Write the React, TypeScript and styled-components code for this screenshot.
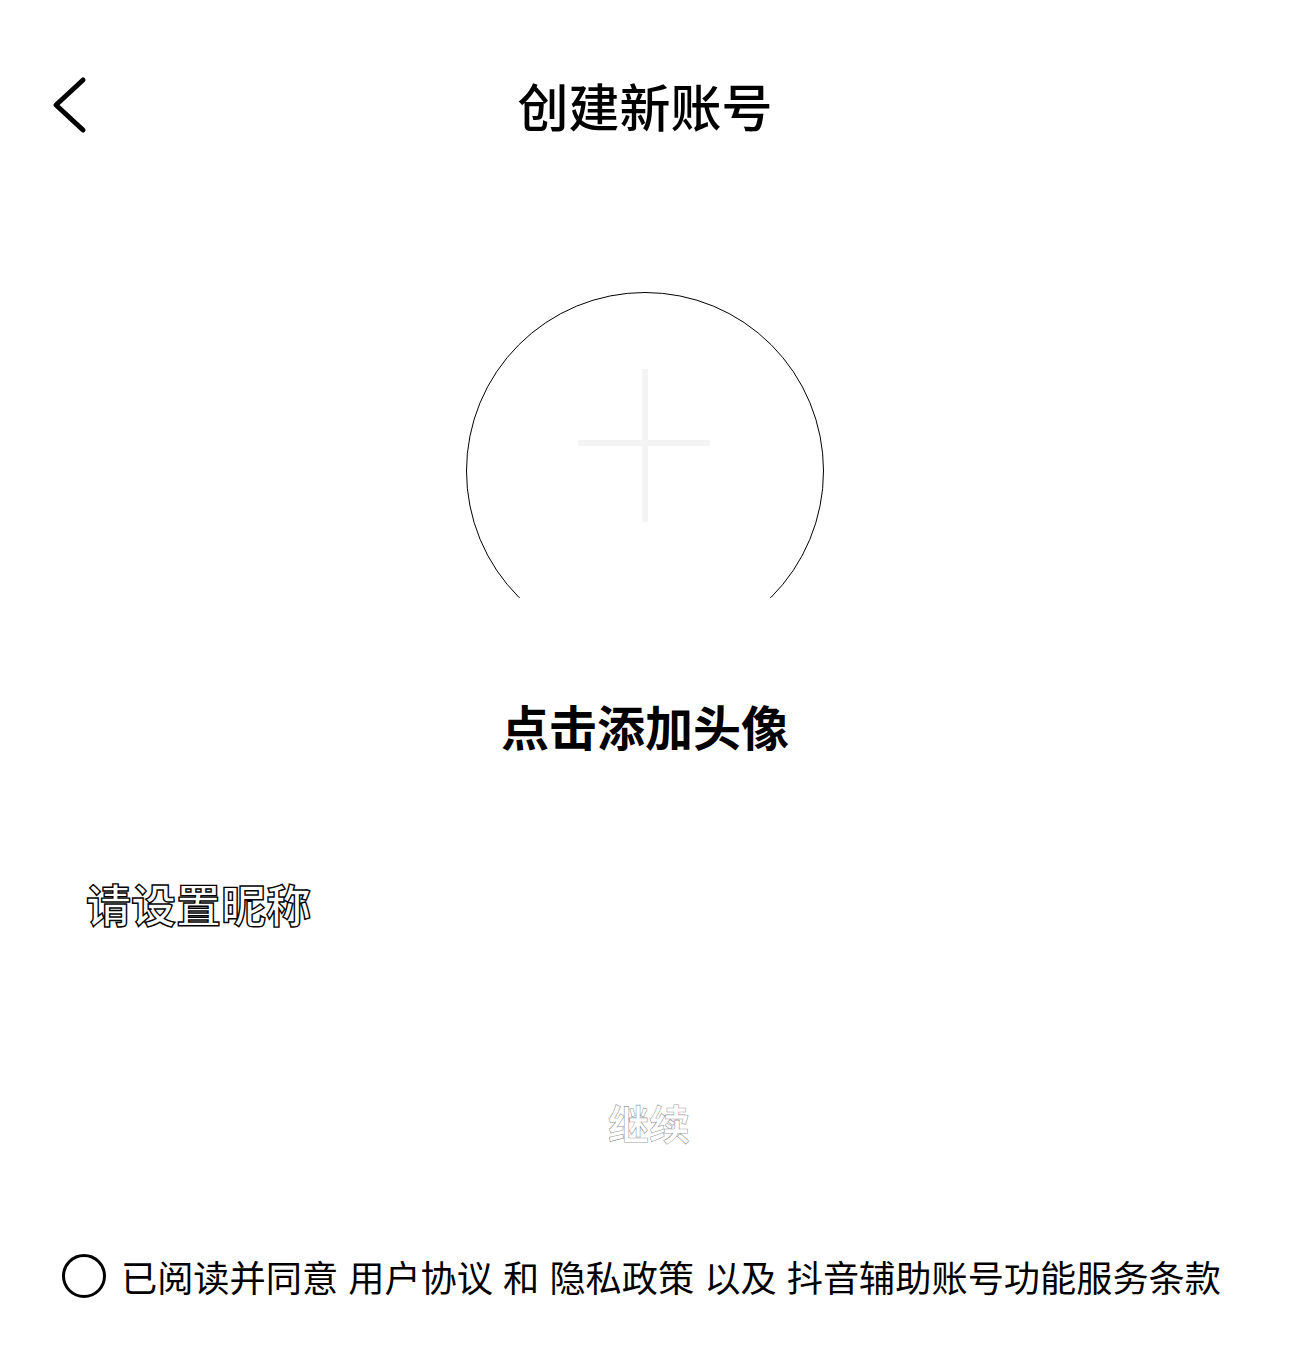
import React from "react";
import styled, { createGlobalStyle } from "styled-components";

const GlobalStyle = createGlobalStyle`
  html, body {
    margin: 0;
    padding: 0;
    background: #ffffff;
  }
  body {
    font-family: "Noto Sans CJK SC", "Noto Sans", sans-serif;
    color: #000;
  }
`;

const Page = styled.div`
  width: 1290px;
  height: 1348px;
  display: flex;
  flex-direction: column;
  align-items: stretch;
  background: #fff;
  overflow: hidden;
`;

const Header = styled.header`
  position: relative;
  height: 210px;
  display: flex;
  align-items: center;
  justify-content: center;
`;

const BackButton = styled.button`
  position: absolute;
  left: 48px;
  top: 74px;
  width: 42px;
  height: 62px;
  padding: 0;
  border: none;
  background: transparent;
  display: flex;
  align-items: center;
  justify-content: center;
  cursor: pointer;
`;

const Title = styled.h1`
  margin: 0;
  font-size: 51px;
  line-height: 60px;
  font-weight: 500;
  letter-spacing: 0;
`;

const AvatarSection = styled.section`
  margin-top: 82px;
  display: flex;
  flex-direction: column;
  align-items: center;
`;

const AvatarCircle = styled.div`
  position: relative;
  width: 358px;
  height: 358px;
  border: 1px solid #000;
  border-radius: 50%;
  display: flex;
  align-items: center;
  justify-content: center;
  padding-bottom: 48px;
  box-sizing: border-box;
  background: #fff;
`;

const AvatarBand = styled.div`
  position: absolute;
  left: -3px;
  right: -3px;
  bottom: -3px;
  height: 54px;
  background: #fff;
`;

const AvatarLabel = styled.div`
  margin-top: 51px;
  font-size: 48px;
  line-height: 48px;
  font-weight: 700;
`;

const NicknameRow = styled.div`
  margin-top: 133px;
  padding-left: 86px;
  height: 44px;
  display: flex;
  align-items: center;
`;

const NicknameText = styled.span`
  font-size: 45px;
  line-height: 44px;
  font-weight: 700;
  color: #fff;
  -webkit-text-stroke: 1.4px #000;
`;

const ContinueButton = styled.button`
  margin: 174px auto 0;
  width: 1160px;
  height: 44px;
  border: none;
  background: #fff;
  padding: 0 0 0 8px;
  font-family: "Noto Sans CJK SC", "Noto Sans", sans-serif;
  font-size: 41px;
  line-height: 44px;
  font-weight: 700;
  color: #fff;
  -webkit-text-stroke: 0.6px rgba(0, 0, 0, 0.45);
`;

const Agreement = styled.div`
  margin-top: 110px;
  padding-left: 62px;
  display: flex;
  align-items: center;
  gap: 15px;
`;

const Radio = styled.span`
  width: 38px;
  height: 38px;
  border: 3px solid #000;
  border-radius: 50%;
  flex-shrink: 0;
`;

const AgreementText = styled.span`
  font-size: 36.2px;
  line-height: 44px;
  font-weight: 400;
  word-spacing: 2px;
  white-space: nowrap;
`;

export default function App() {
  return (
    <>
      <GlobalStyle />
      <Page>
        <Header>
          <BackButton aria-label="返回">
            <svg width="42" height="62" viewBox="0 0 42 62" fill="none">
              <polyline
                points="35,6 8,31 35,56"
                stroke="#000"
                strokeWidth="5"
                strokeLinecap="round"
                strokeLinejoin="round"
              />
            </svg>
          </BackButton>
          <Title>创建新账号</Title>
        </Header>

        <AvatarSection>
          <AvatarCircle>
            <svg width="140" height="160" viewBox="0 0 140 160" fill="none">
              <line x1="70" y1="2" x2="70" y2="155" stroke="#f4f4f4" strokeWidth="6" />
              <line x1="3" y1="76" x2="135" y2="76" stroke="#f4f4f4" strokeWidth="6" />
            </svg>
            <AvatarBand />
          </AvatarCircle>
          <AvatarLabel>点击添加头像</AvatarLabel>
        </AvatarSection>

        <NicknameRow>
          <NicknameText>请设置昵称</NicknameText>
        </NicknameRow>

        <ContinueButton>继续</ContinueButton>

        <Agreement>
          <Radio />
          <AgreementText>已阅读并同意 用户协议 和 隐私政策 以及 抖音辅助账号功能服务条款</AgreementText>
        </Agreement>
      </Page>
    </>
  );
}
